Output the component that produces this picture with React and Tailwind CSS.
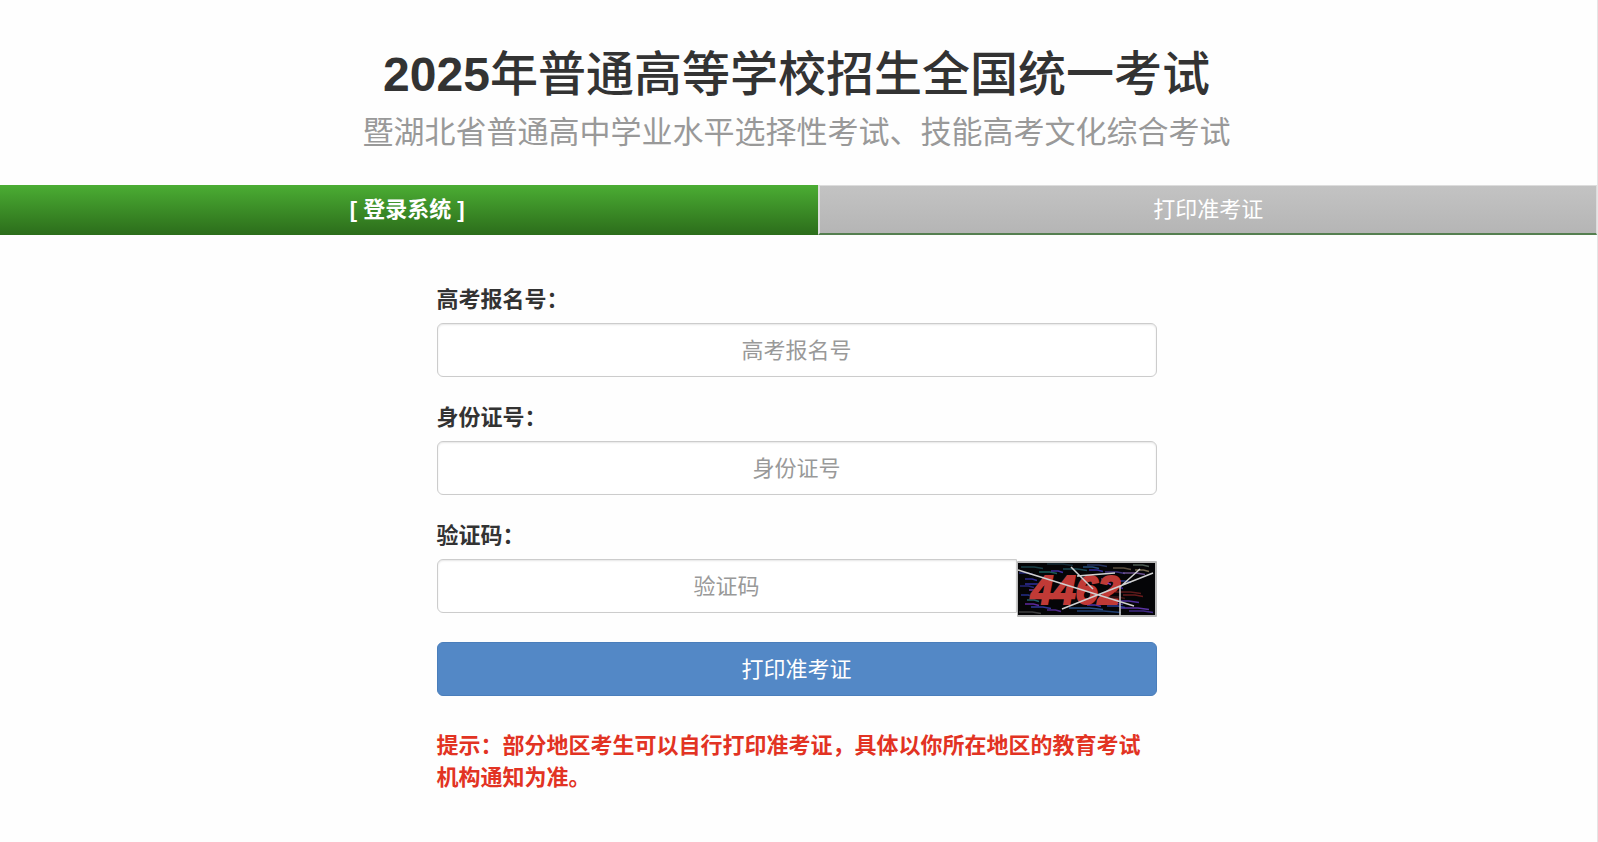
const noise = [
  [4, 6, 22, "#1d4a52"], [30, 3, 26, "#17323f"], [70, 4, 20, "#2b3a6b"], [96, 7, 18, "#6b5d4a"], [116, 4, 16, "#5a6b60"],
  [2, 12, 14, "#2a2f8f"], [22, 11, 18, "#1f6b66"], [46, 8, 24, "#1e5560"], [88, 11, 20, "#473a8f"], [106, 12, 22, "#7a5aa0"],
  [8, 18, 12, "#352fa8"], [84, 18, 14, "#6a3fb0"], [98, 20, 16, "#2d3f9a"], [3, 25, 14, "#2b2b8a"], [12, 29, 10, "#7b3fc0"],
  [96, 26, 10, "#4a2fb0"], [8, 23, 20, "#3a36b8"], [98, 31, 26, "#6b1f1f"], [106, 34, 20, "#7a2020"], [92, 36, 16, "#4a1a1a"],
  [4, 34, 12, "#2a36a0"], [96, 40, 26, "#5a35b5"], [84, 42, 22, "#3c2a90"], [8, 43, 14, "#6d2fb8"], [14, 46, 20, "#3a42b0"],
  [52, 47, 34, "#2f5a9a"], [60, 50, 44, "#274a86"], [104, 47, 28, "#6a3cc0"], [112, 50, 24, "#4a2f9a"], [2, 51, 22, "#4a4a4a"],
  [30, 49, 14, "#5a2fa0"], [34, 10, 12, "#4a36b8"], [72, 9, 14, "#3a2fb0"], [118, 9, 14, "#8a7a5a"], [86, 22, 8, "#8a4ad0"],
  [18, 36, 14, "#4338c0"], [10, 39, 12, "#28707a"], [66, 6, 16, "#285a90"], [90, 45, 18, "#3648a8"], [70, 44, 14, "#5a3ac0"],
];

function Captcha() {
  return (
    <svg viewBox="0 0 140 56" role="img" aria-label="验证码图片" className="block h-14 w-[140px]">
      <rect width="140" height="56" rx="1" fill="#b9b9b9" />
      <rect x="1" y="2" width="137" height="52" fill="#050507" />
      {noise.map(([x, y, w, c], i) => (
        <path key={i} d={`M${x} ${y}h${w * 0.6}l${w * 0.4} 1.5`} stroke={c} strokeWidth="1.5" opacity="0.85" fill="none" />
      ))}
      <text
        x="14"
        y="43"
        fill="#c03a36"
        stroke="#c03a36"
        strokeWidth="2"
        className="font-['Liberation_Sans',sans-serif] text-[40px] font-bold italic"
      >
        4462
      </text>
      <g fill="none" stroke="#d0d0d0" strokeWidth="1.5">
        <path d="M1 9L117 45M45 48L136 12M54 6L76 28M60 15L98 12M123 8L103 26V55" />
      </g>
    </svg>
  );
}

const inputClass =
  "h-[54px] w-full min-w-0 border border-[#cccccc] bg-white px-4 pt-0.5 text-center text-[22px] text-[#555555] shadow-[inset_0_1px_2px_rgba(0,0,0,0.1)] outline-none placeholder:text-[#999999] focus:border-[#66afe9]";

function Field({ id, label, children }) {
  return (
    <div>
      <label htmlFor={id} className="mb-[7px] block font-bold">
        {label}
      </label>
      {children}
    </div>
  );
}

export default function App() {
  return (
    <div className="min-h-screen border-r border-[#e5e5e5] bg-[#fefefe] font-['Liberation_Sans','Noto_Sans_CJK_SC',sans-serif] text-[22px] leading-8 text-[#333333]">
      <header className="pt-[45px] pr-1 pb-7 text-center">
        <h1 className="text-5xl leading-[60px] font-medium">
          <span className="font-bold">2025</span>年普通高等学校招生全国统一考试
        </h1>
        <p className="mt-1 text-[31px] leading-[48px] text-[#999999]">
          暨湖北省普通高中学业水平选择性考试、技能高考文化综合考试
        </p>
      </header>

      <nav className="flex h-[50px] text-center leading-[50px] text-white">
        <a href="#login" className="w-[51.25%] bg-linear-to-b from-[#4bad33] to-[#2c6d1b] pr-1 font-bold">
          [ 登录系统 ]
        </a>
        <a
          href="#print"
          className="flex-1 border-t border-r border-b-2 border-l-2 border-t-[#dddddd] border-r-[#dddddd] border-b-[#557f50] border-l-[#dddddd] bg-linear-to-b from-[#c3c3c3] to-[#b5b5b5] leading-[48px]"
        >
          打印准考证
        </a>
      </nav>

      <main className="px-6 pt-[49px] pr-7 pb-10">
        <form className="mx-auto max-w-[720px]" onSubmit={(e) => e.preventDefault()}>
          <div className="flex flex-col gap-[25px]">
            <Field id="exam-no" label="高考报名号：">
              <input id="exam-no" type="text" placeholder="高考报名号" className={`${inputClass} rounded-md`} />
            </Field>
            <Field id="id-no" label="身份证号：">
              <input id="id-no" type="text" placeholder="身份证号" className={`${inputClass} rounded-md`} />
            </Field>
            <Field id="captcha" label="验证码：">
              <div className="flex items-start">
                <input id="captcha" type="text" placeholder="验证码" className={`${inputClass} flex-1 rounded-l-md`} />
                <div className="pt-0.5">
                  <Captcha />
                </div>
              </div>
            </Field>
            <button
              type="submit"
              className="h-[54px] w-full cursor-pointer rounded-md border border-[#4a7ebb] bg-[#5388c6] pt-0.5 text-white"
            >
              打印准考证
            </button>
          </div>
          <p className="pt-[34px] font-bold text-[#e23323]">
            提示：部分地区考生可以自行打印准考证，具体以你所在地区的教育考试机构通知为准。
          </p>
        </form>
      </main>
    </div>
  );
}
